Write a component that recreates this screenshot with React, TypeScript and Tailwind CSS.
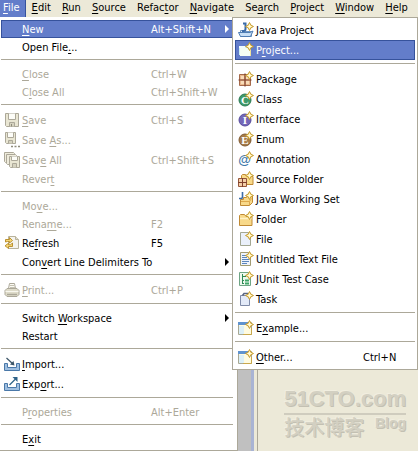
import type { ReactNode } from "react";

type Item = {
  label: string;
  icon?: ReactNode;
  shortcut?: string;
  disabled?: boolean;
  active?: boolean;
  submenu?: boolean;
};

type Entry = Item | "separator";

// the character after "&" is the mnemonic
const Label = ({ text }: { text: string }) => {
  const at = text.indexOf("&");
  if (at < 0) return <>{text}</>;
  return (
    <>
      {text.slice(0, at)}
      <u className="underline decoration-1 underline-offset-2">{text[at + 1]}</u>
      {text.slice(at + 2)}
    </>
  );
};

const Icon = ({ children }: { children: ReactNode }) => (
  <svg viewBox="0 0 16 16" className="block h-4 w-4" aria-hidden="true">
    {children}
  </svg>
);

const Sparkle = () => (
  <>
    <path d="M11.5.5l1.4 2.6 2.6 1.4-2.6 1.4-1.4 2.6-1.4-2.6-2.6-1.4 2.6-1.4z" fill="#fbe28a" stroke="#c0962f" strokeWidth=".9" />
    <path d="M11.5 2.5v4M9.5 4.5h4" stroke="#fffbe0" />
  </>
);

const Badge = ({ letter, fill, edge }: { letter: string; fill: string; edge: string }) => (
  <Icon>
    <circle cx="7" cy="9" r="6" fill={fill} stroke={edge} />
    <text x="7" y="13" textAnchor="middle" fontSize="11" fontWeight="700" fill="#fff" className="font-['Liberation_Serif',serif]">
      {letter}
    </text>
    <Sparkle />
  </Icon>
);

const Save = () => (
  <Icon>
    <path d="M1.5 1.5h13v13h-12l-1-1z" fill="#e9e6d3" stroke="#aca899" />
    <path d="M4.5 1.5v6h7v-6" fill="#fdfdf8" stroke="#aca899" />
    <path d="M5.5 14.5v-4h5v4" fill="#d5d2bf" stroke="#aca899" />
    <path d="M7.5 12v2.5" stroke="#8f8c7c" />
  </Icon>
);

const SaveAs = () => (
  <Icon>
    <path d="M1.5.5h10v11h-9l-1-1z" fill="#e9e6d3" stroke="#aca899" />
    <path d="M3.5.5v5h6v-5" fill="#fdfdf8" stroke="#aca899" />
    <path d="M4.5 11.5v-3h4v3" fill="#d5d2bf" stroke="#aca899" />
    <path d="M7 14.5h2M10.5 14.5h2M14 14.5h2" stroke="#8f8c7c" strokeWidth="1.5" />
  </Icon>
);

const SaveAll = () => (
  <Icon>
    <path d="M.5.5h9l1 1v9h-9l-1-1z" fill="#efecdc" stroke="#aca899" />
    <path d="M2.5 2.5h9l1 1v9h-9l-1-1z" fill="#efecdc" stroke="#aca899" />
    <path d="M5.5 4.5h10v11h-9l-1-1z" fill="#e9e6d3" stroke="#aca899" />
    <path d="M7.5 4.5v4h6v-4" fill="#fdfdf8" stroke="#aca899" />
    <path d="M8.5 15.5v-4h4v4" fill="#d5d2bf" stroke="#aca899" />
  </Icon>
);

const Refresh = () => (
  <Icon>
    <path d="M4.5 1.5h7l3 3v9h-10z" fill="#f4f3ee" stroke="#b9b39b" />
    <path d="M11.5 1.5v3h3" fill="#e0dccb" stroke="#b9b39b" />
    <path d="M1.5 7V4.5h4v-2l3 3-3 2.5V6.5h-2z" fill="#f7d774" stroke="#b58a26" strokeWidth=".9" />
    <path d="M8.5 8v3.5h-4v2L1 10.8l3.5-2.6v1.5h2z" fill="#f7d774" stroke="#b58a26" strokeWidth=".9" />
  </Icon>
);

const Print = () => (
  <Icon>
    <path d="M4.5 6.5l1-5h5l1 5" fill="#fbfaf4" stroke="#aca899" />
    <path d="M6 3.5h4M6 5.5h5" stroke="#c5c2b2" />
    <path d="M3 6.5h10l2 2v4l-2 2H3l-2-2v-4z" fill="#dedbc9" stroke="#aca899" />
    <path d="M1.5 9.5h13" stroke="#f8f7ee" />
    <path d="M3 12.5h10" stroke="#aca899" strokeWidth="1.5" />
  </Icon>
);

const Tray = () => <path d="M.5 7.5h3v4h9v-4h3v7H.5z" fill="#9fbfe0" stroke="#4a78a8" />;

const Import = () => (
  <Icon>
    <Tray />
    <path d="M2.5 2L9 8" stroke="#3c5568" strokeWidth="1.2" />
    <path d="M10.5 9.5L6 8.5 9.5 5z" fill="#3c5568" />
  </Icon>
);

const Export = () => (
  <Icon>
    <Tray />
    <path d="M5.5 9l6-6" stroke="#2e6288" strokeWidth="1.2" />
    <path d="M13.5 1v5l-5-5z" fill="#2e6288" />
  </Icon>
);

const JavaProject = () => (
  <Icon>
    <path d="M2.5 14.5v-6h3l1 1h7v5z" fill="#e3effb" stroke="#6f94bf" />
    <path d="M.5 10.5H12l3-1.5-2.5 5.5h-10z" fill="#c6def5" stroke="#4f7db3" />
    <path d="M5 1.5h2.5V7q0 2-2 2H4" fill="none" stroke="#3a6ba8" strokeWidth="2" />
    <Sparkle />
  </Icon>
);

const Project = () => (
  <Icon>
    <path d="M1 4h9v9H1z" fill="#cdeff5" />
    <path d="M1 4h6v2H1z" fill="#f1fbff" />
    <path d="M2 6h11v8H2z" fill="#f4fdf4" />
    <path d="M12.5 7v7" stroke="#efe29c" />
    <Sparkle />
  </Icon>
);

const Package = () => (
  <Icon>
    <path d="M1.5 3.5h11v11h-11z" fill="#e9b78c" stroke="#a4694a" />
    <path d="M3 5h3v3H3zM8 5h3v3H8zM3 10h3v3H3zM8 10h3v3H8z" fill="#f8dcb9" />
    <path d="M7 2.5v13M.5 9h13" stroke="#7d3f2c" strokeWidth="1.2" />
    <Sparkle />
  </Icon>
);

const Annotation = () => (
  <Icon>
    <text x="6.5" y="12.5" textAnchor="middle" fontSize="13" fontWeight="700" fill="#3d78a8" className="font-['Liberation_Sans',sans-serif]">
      @
    </text>
    <Sparkle />
  </Icon>
);

const SourceFolder = () => (
  <Icon>
    <path d="M3.5 13.5v-9l1-1h3L9 5.5h6v8z" fill="#f8d98a" stroke="#c08a35" />
    <path d="M.5 7.5h8v8h-8z" fill="#f3cfa8" stroke="#96563a" />
    <path d="M4.5 7v9M0 11.5h9" stroke="#7d3f2c" />
    <Sparkle />
  </Icon>
);

const WorkingSet = () => (
  <Icon>
    <path d="M5.5 8.5v-2h3l1-2h5v7l-3 3h-9v-6z" fill="#f8d98a" stroke="#c08a35" />
    <path d="M3 10.5h8.5l2-3M11.5 10.5v4" fill="none" stroke="#dda94d" />
    <path d="M4.5 1v5q0 1.5-1.5 1.5H1" fill="none" stroke="#3a6ba8" strokeWidth="1.6" />
    <Sparkle />
  </Icon>
);

const Folder = () => (
  <Icon>
    <path d="M1.5 14.5v-10l1-1h4L8 5.5h6v9z" fill="#f8d98a" stroke="#c08a35" />
    <path d="M2 7.5h11.5" stroke="#fff2c5" strokeWidth="1.5" />
    <Sparkle />
  </Icon>
);

const File = () => (
  <Icon>
    <path d="M2.5 1.5h8l2 3v10h-10z" fill="#eaf0fb" stroke="#a3a793" />
    <Sparkle />
  </Icon>
);

const TextFile = () => (
  <Icon>
    <path d="M2.5 1.5h8l2 3v10h-10z" fill="#eef3fb" stroke="#a19b72" />
    <path d="M4 4.5h4M4 6.5h5M4 8.5h7M4 10.5h7M4 12.5h5" stroke="#5c86bd" />
    <Sparkle />
  </Icon>
);

const JUnit = () => (
  <Icon>
    <path d="M1.5 1.5h9l2 3v10h-11z" fill="#eef8ee" stroke="#6fa585" />
    <path d="M4.5 3v9.5M4 5.5h4M4 9.5h2M4 12.5h2" stroke="#2f8a55" />
    <path d="M7 8.5h4v2H7zM7 11.5h4v2H7z" fill="#3fa568" />
    <Sparkle />
  </Icon>
);

const Task = () => (
  <Icon>
    <path d="M2.5 4.5h9v10h-9z" fill="#e3eaf8" stroke="#7f8ba8" />
    <path d="M4.5 4.5l1.5-2h4" fill="none" stroke="#59657f" strokeWidth="1.5" />
    <Sparkle />
  </Icon>
);

const Wizard = () => (
  <Icon>
    <path d="M.5 2.5h13v12H.5z" fill="#fffbe0" stroke="#a8a894" />
    <path d="M0 2h12v3H0z" fill="#5f93cf" />
    <path d="M1 6h5v8H1z" fill="#dcf0f8" />
    <path d="M13.5 8v6.5H5" fill="none" stroke="#c9a84c" />
    <Sparkle />
  </Icon>
);

const menuBar = ["&File", "&Edit", "&Run", "&Source", "Refac&tor", "&Navigate", "Se&arch", "&Project", "&Window", "&Help"];

const fileMenu: Entry[] = [
  { label: "&New", shortcut: "Alt+Shift+N", active: true, submenu: true },
  { label: "Open File&..." },
  "separator",
  { label: "&Close", shortcut: "Ctrl+W", disabled: true },
  { label: "C&lose All", shortcut: "Ctrl+Shift+W", disabled: true },
  "separator",
  { label: "&Save", shortcut: "Ctrl+S", icon: <Save />, disabled: true },
  { label: "Save &As...", icon: <SaveAs />, disabled: true },
  { label: "Sav&e All", shortcut: "Ctrl+Shift+S", icon: <SaveAll />, disabled: true },
  { label: "Rever&t", disabled: true },
  "separator",
  { label: "Mo&ve...", disabled: true },
  { label: "Rena&me...", shortcut: "F2", disabled: true },
  { label: "Re&fresh", shortcut: "F5", icon: <Refresh /> },
  { label: "Con&vert Line Delimiters To", submenu: true },
  "separator",
  { label: "&Print...", shortcut: "Ctrl+P", icon: <Print />, disabled: true },
  "separator",
  { label: "Switch &Workspace", submenu: true },
  { label: "Restart" },
  "separator",
  { label: "&Import...", icon: <Import /> },
  { label: "Exp&ort...", icon: <Export /> },
  "separator",
  { label: "P&roperties", shortcut: "Alt+Enter", disabled: true },
  "separator",
  { label: "E&xit" },
];

const newMenu: Entry[] = [
  { label: "Java Project", icon: <JavaProject /> },
  { label: "P&roject...", icon: <Project />, active: true },
  "separator",
  { label: "Package", icon: <Package /> },
  { label: "Class", icon: <Badge letter="C" fill="#3f9a6b" edge="#2b7a52" /> },
  { label: "Interface", icon: <Badge letter="I" fill="#7468b8" edge="#574b9c" /> },
  { label: "Enum", icon: <Badge letter="E" fill="#a67c4a" edge="#805a30" /> },
  { label: "Annotation", icon: <Annotation /> },
  { label: "Source Folder", icon: <SourceFolder /> },
  { label: "Java Working Set", icon: <WorkingSet /> },
  { label: "Folder", icon: <Folder /> },
  { label: "File", icon: <File /> },
  { label: "Untitled Text File", icon: <TextFile /> },
  { label: "JUnit Test Case", icon: <JUnit /> },
  { label: "Task", icon: <Task /> },
  "separator",
  { label: "E&xample...", icon: <Wizard /> },
  "separator",
  { label: "&Other...", shortcut: "Ctrl+N", icon: <Wizard /> },
];

const Menu = ({ name, entries, columns }: { name: string; entries: Entry[]; columns: string }) => (
  <div role="menu" aria-label={name}>
    {entries.map((entry, i) =>
      entry === "separator" ? (
        <hr key={i} className="mt-[3px] mb-[5px] border-t border-[#aca899]" />
      ) : (
        <button
          key={i}
          type="button"
          role="menuitem"
          disabled={entry.disabled}
          className={`grid w-full items-center border pr-px pl-0.5 text-left leading-[14px] whitespace-nowrap ${columns} ${
            entry.icon ? "h-5" : "h-[18px]"
          } ${entry.active ? "border-[#36529c] bg-[#637dca] text-white" : "border-transparent"} ${
            entry.disabled ? "text-[#aca899]" : ""
          }`}
        >
          <span>{entry.icon}</span>
          <span className="pt-0.5">
            <Label text={entry.label} />
          </span>
          <span className="pt-0.5">{entry.shortcut}</span>
          {entry.submenu && (
            <svg viewBox="0 0 4 8" className="h-2 w-1" aria-hidden="true">
              <path d="M0 0l4 4-4 4z" fill="currentColor" />
            </svg>
          )}
        </button>
      )
    )}
  </div>
);

export default function App() {
  return (
    <div className="relative min-h-screen overflow-hidden bg-[#ece9d8] font-['DejaVu_Sans_Condensed','DejaVu_Sans',sans-serif] text-[11px] text-black">
      <nav className="flex h-[17px] max-w-[413px] items-start justify-between">
        {menuBar.map((name, i) => (
          <button
            key={name}
            type="button"
            className={`h-[17px] pr-[5px] pb-0.5 leading-[14px] ${
              i === 0 ? "border-r border-[#36529c] bg-[#637dca] pl-[3px] text-white" : "pl-[6px]"
            }`}
          >
            <Label text={name} />
          </button>
        ))}
      </nav>

      <div className="flex items-stretch">
        <div className="w-[238px] shrink-0 border-r border-b border-[#aca899] bg-white pt-[3px] pr-1 pb-0.5 pl-px">
          <Menu name="File" entries={fileMenu} columns="grid-cols-[18px_minmax(0,1fr)_74px_6px]" />
        </div>
        <div className="w-[13px] shrink-0 bg-[#c0c0c0]" />
        <div className="w-[3px] shrink-0 bg-[#a9b4d4]" />
        <div className="w-1 shrink-0 border-r border-[#aca899]" />
        <div className="flex flex-1 items-end justify-end pr-3 pb-3">
          <div className="text-[#d3d0c2] [text-shadow:1px_1px_0_#c3c0b2,-1px_-1px_0_#f1eee0]">
            <div className="border-b-2 border-[#cfccbe] font-['Liberation_Sans',sans-serif] text-[22px] leading-7 font-bold">
              51CTO.com
            </div>
            <div className="flex items-start justify-between">
              <span className="font-['Noto_Sans_CJK_SC',sans-serif] text-[20px] leading-6 font-medium">技术博客</span>
              <span className="font-['Liberation_Sans',sans-serif] text-[14px] leading-4 font-bold">Blog</span>
            </div>
          </div>
        </div>
      </div>

      <div className="absolute top-[17px] right-0 w-[186px] border border-[#aca899] bg-white p-0.5">
        <Menu name="New" entries={newMenu} columns="grid-cols-[18px_1fr_50px]" />
      </div>
    </div>
  );
}
